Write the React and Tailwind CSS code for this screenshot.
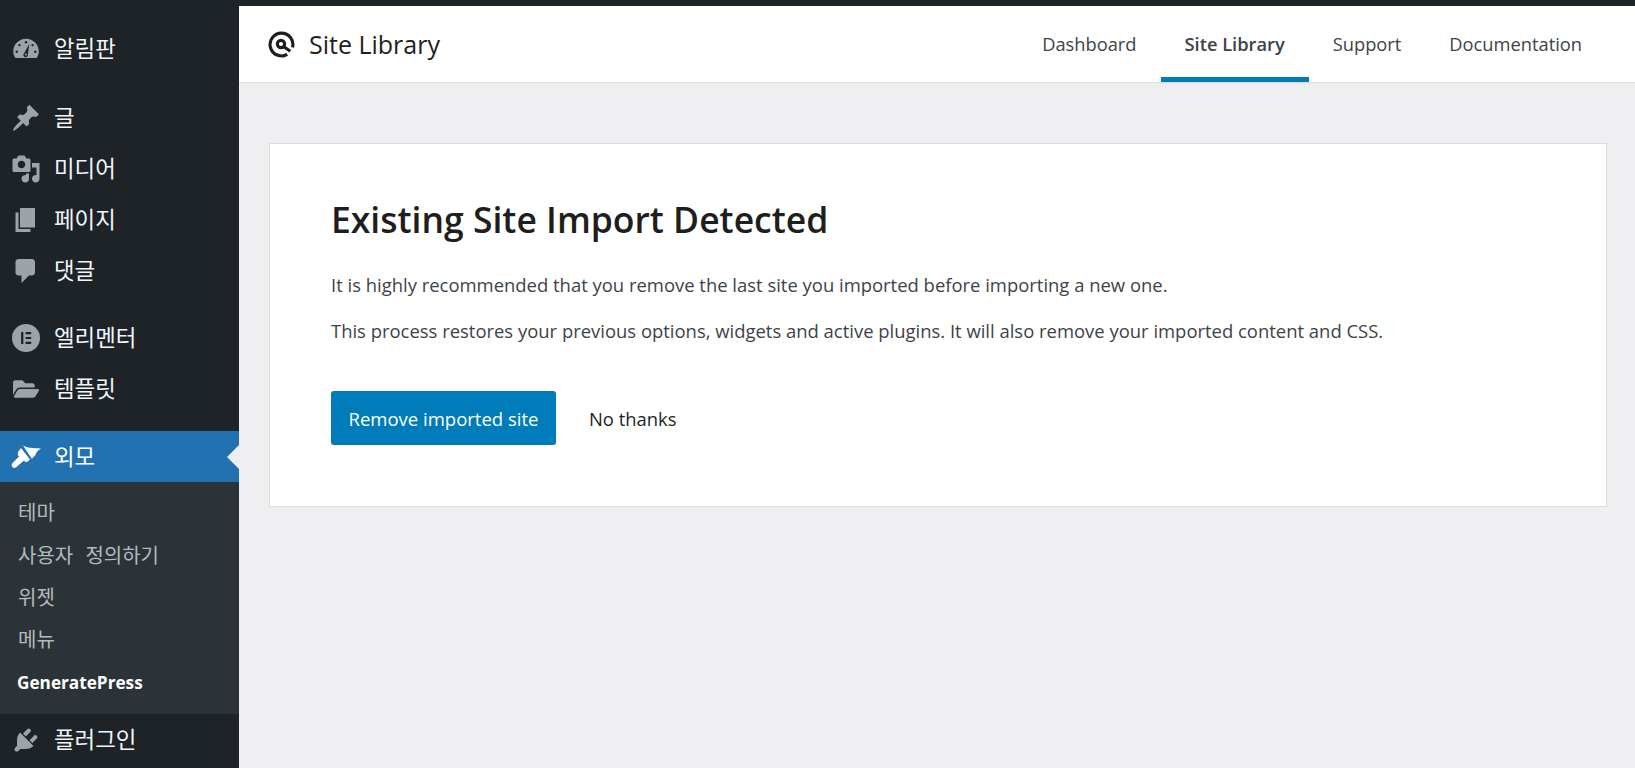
import { FaFolderOpen } from 'react-icons/fa';

const font = "font-['Open_Sans','Noto_Sans_CJK_KR',sans-serif]";

const Dash = ({ d }) => (
    <svg viewBox="0 0 20 20" className="w-[30px] h-[30px]" fill="currentColor">
        <path d={d} />
    </svg>
);

const icons = {
    post: 'M10.44 3.02l1.82-1.82 6.36 6.35-1.83 1.82c-1.05-.68-2.48-.57-3.41.36l-.75.75c-.92.93-1.04 2.35-.35 3.41l-1.83 1.82-2.41-2.41-2.8 2.79c-.42.42-3.38 2.71-3.8 2.29s1.86-3.39 2.28-3.81l2.79-2.79L4.1 9.36l1.83-1.82c1.05.69 2.48.57 3.4-.36l.75-.75c.93-.92 1.05-2.35.36-3.41z',
    media: 'M13 11V4c0-.55-.45-1-1-1h-1.67L9 1H5L3.67 3H2c-.55 0-1 .45-1 1v7c0 .55.45 1 1 1h10c.55 0 1-.45 1-1zM7 4.5c1.38 0 2.5 1.12 2.5 2.5S8.38 9.5 7 9.5 4.5 8.38 4.5 7 5.62 4.5 7 4.5zM14 6h5v10.5c0 1.38-1.12 2.5-2.5 2.5S14 17.88 14 16.5s1.12-2.5 2.5-2.5c.17 0 .34.02.5.05V9h-3V6zm-4 8.05V13h2v3.5c0 1.38-1.12 2.5-2.5 2.5S7 17.88 7 16.5 8.12 14 9.5 14c.17 0 .34.02.5.05z',
    page: 'M6 15V2h10v13H6zm-1 1h8v2H3V5h2v11z',
    comments: 'M5 2h9c1.1 0 2 .9 2 2v7c0 1.1-.9 2-2 2h-2l-5 5v-5H5c-1.1 0-2-.9-2-2V4c0-1.1.9-2 2-2z',
    plugin: 'M13.11 4.36L9.87 7.6 8 5.73l3.24-3.24c.35-.34 1.05-.2 1.56.32.52.51.66 1.21.31 1.55zm-8 1.77l.91-1.12 9.01 9.01-1.19.84c-.71.71-2.63 1.16-3.82 1.16H6.14L4.9 17.26c-.59.59-1.54.59-2.12 0-.59-.58-.59-1.53 0-2.12l1.24-1.24v-3.88c0-1.13.4-3.05 1.09-3.89zm7.26 3.97l3.24-3.24c.34-.35 1.04-.21 1.55.31.52.51.66 1.21.31 1.56l-3.24 3.24z',
};

const DashboardIcon = () => (
    <svg viewBox="0 0 20 20" className="w-[30px] h-[30px]" fill="currentColor">
        <path d="M3 16h14c1-1.300 1.500-2.800 1.500-4.400C18.500 7 14.700 3.200 10 3.200S1.500 7 1.500 11.600C1.500 13.200 2 14.700 3 16z" />
        <g fill="#1d2327">
            <circle cx="10" cy="5.500" r=".8" />
            <circle cx="5.600" cy="7.400" r=".8" />
            <circle cx="14.400" cy="7.400" r=".8" />
            <circle cx="3.800" cy="11.800" r=".8" />
            <circle cx="16.200" cy="11.800" r=".8" />
            <path d="M12.200 6.500l-1 7.300a1.500 1.500 0 1 1-2.400-1z" />
        </g>
        <circle cx="9.900" cy="13.700" r=".7" />
    </svg>
);

const ElementorIcon = () => (
    <svg viewBox="0 0 20 20" className="w-[28px] h-[28px]" fill="currentColor">
        <path fillRule="evenodd" d="M10 0a10 10 0 1 0 0 20 10 10 0 0 0 0-20zM6.500 5.800h1.600v8.400H6.500zM9.700 5.800h4v1.600h-4zM9.700 9.200h4v1.600h-4zM9.700 12.600h4v1.600h-4z" />
    </svg>
);

const BrushIcon = () => (
    <svg viewBox="0 0 30 24" className="w-[30px] h-[24px]" fill="currentColor">
        <path d="M12 .5C16 3 22 3 30 3.500 26 6 25 8 24 11c-1 0-2.500 1.500-3 3z" />
        <path d="M10 3l9 11.500L16 17c-1 .2-2.200-.3-3-1.500l-7 6c-1.700 1.800-3.500 2-4.500.5-1.300-1.500-1.200-3 .5-4.500l6-6c-1.400-1.500-1.500-3-1-4.500z" />
    </svg>
);

const MenuItem = ({ icon, label, active }) => (
    <div className={`relative flex items-center h-[51px] ${active ? 'bg-[#2271b1] text-white' : 'text-[#f0f6fc]'}`}>
        <span className={`flex w-[53px] pr-[1px] justify-center ${active ? 'text-white' : 'text-[#9ea3a8]'}`}>
            {icon}
        </span>
        <span className="ml-[1px] pt-[1px] text-[22.4px] leading-none">{label}</span>
        {active && (
            <span className="absolute right-0 top-[14px] border-y-[12px] border-r-[12px] border-y-transparent border-r-[#efeff1]" />
        )}
    </div>
);

const submenu = ['테마', '사용자 정의하기', '위젯', '메뉴'];

const Sidebar = () => (
    <aside className="w-[239px] shrink-0 bg-[#1d2327] pt-[17px]">
        <MenuItem icon={<DashboardIcon />} label="알림판" />
        <div className="mt-[18px]">
            <MenuItem icon={<Dash d={icons.post} />} label="글" />
            <MenuItem icon={<Dash d={icons.media} />} label="미디어" />
            <MenuItem icon={<Dash d={icons.page} />} label="페이지" />
            <MenuItem icon={<Dash d={icons.comments} />} label="댓글" />
        </div>
        <div className="mt-[16px]">
            <MenuItem icon={<ElementorIcon />} label="엘리멘터" />
            <MenuItem icon={<FaFolderOpen className="w-[26px] h-[26px]" />} label="템플릿" />
        </div>
        <div className="mt-[17px]">
            <MenuItem icon={<BrushIcon />} label="외모" active />
        </div>
        <div className="bg-[#2c3338] h-[232px] pt-[10px]">
            {submenu.map((item) => (
                <div key={item} className="flex h-[42.4px] items-center pl-[18px] text-[20px] leading-none text-[#b4b9be] [word-spacing:7px]">
                    {item}
                </div>
            ))}
            <div className="flex h-[42.4px] items-center pl-[17px] text-[17.2px] font-bold leading-none text-white">
                GeneratePress
            </div>
        </div>
        <MenuItem icon={<Dash d={icons.plugin} />} label="플러그인" />
    </aside>
);

const Tab = ({ label, active }) => (
    <div className={`flex h-[76px] items-center px-[24px] pt-[4px] border-b-[5px] text-[18.3px] ${active ? 'border-[#007cba] font-semibold text-[#3c434a]' : 'border-transparent text-[#3c434a]'}`}>
        {label}
    </div>
);

const App = () => {
    return (
        <div className={`flex flex-col h-[768px] overflow-hidden bg-[#efeff1] ${font}`}>
            <div className="h-[6px] shrink-0 bg-[#1d2327]" />
            <div className="flex flex-1 min-h-0">
                <Sidebar />
                <main className="flex-1">
                    {/* Header */}
                    <header className="flex items-center justify-between h-[77px] bg-white border-b border-[#dcdcde] pl-[29px] pr-[29px]">
                        <div className="flex items-center gap-[14px] text-[#1e1e1e]">
                            <svg viewBox="0 0 26 26" className="w-[27px] h-[27px]" fill="none" stroke="currentColor" strokeWidth="3">
                                <path d="M18.500 22.500A11 11 0 1 1 23.600 15.800" />
                                <circle cx="12.500" cy="12.500" r="3.500" />
                                <path d="M15 15l6.500 4.500" />
                            </svg>
                            <span className="pt-[1px] text-[25px] font-medium">Site Library</span>
                        </div>
                        <nav className="flex">
                            <Tab label="Dashboard" />
                            <Tab label="Site Library" active />
                            <Tab label="Support" />
                            <Tab label="Documentation" />
                        </nav>
                    </header>

                    {/* Card */}
                    <section className="mt-[60px] ml-[30px] mr-[28px] h-[364px] bg-white border border-[#dcdcde] pt-[50px] pl-[61px]">
                        <h1 className="text-[35.5px] font-semibold leading-[50px] text-[#1e1e1e]">
                            Existing Site Import Detected
                        </h1>
                        <p className="mt-[29px] text-[18.45px] leading-[24px] text-[#3c434a]">
                            It is highly recommended that you remove the last site you imported before importing a new one.
                        </p>
                        <p className="mt-[22px] text-[18.45px] leading-[24px] text-[#3c434a]">
                            This process restores your previous options, widgets and active plugins. It will also remove your imported content and CSS.
                        </p>
                        <div className="flex items-center mt-[48px]">
                            <button className="h-[54px] w-[225px] pt-[1px] rounded-[3px] bg-[#007cba] text-[18.5px] text-white">
                                Remove imported site
                            </button>
                            <span className="ml-[33px] pt-[1px] text-[18.4px] text-[#1e1e1e]">No thanks</span>
                        </div>
                    </section>
                </main>
            </div>
        </div>
    );
};

export default App;
